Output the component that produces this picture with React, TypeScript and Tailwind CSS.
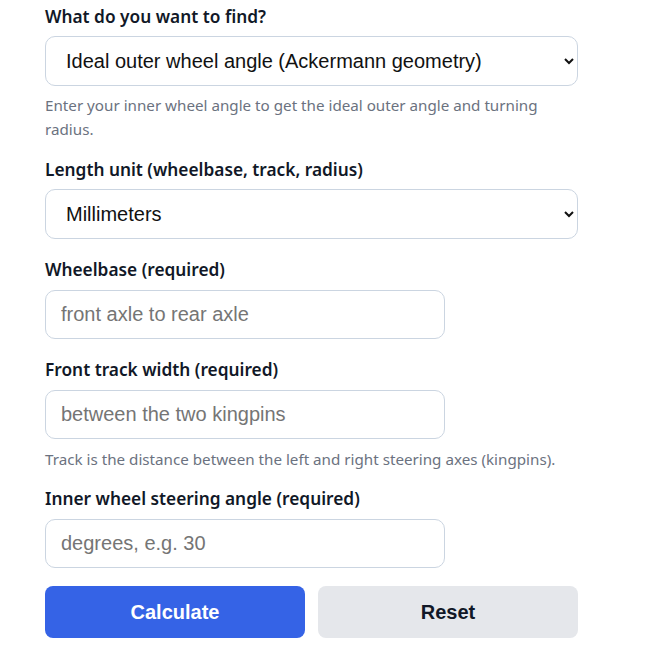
import React from "react";

const labelCls =
  "block text-[17.3px] leading-[24px] font-semibold text-[#111827] [font-family:'Noto_Sans',sans-serif]";
const helpCls =
  "text-[15.2px] leading-[24px] text-[#6b7280] [font-family:'Noto_Sans',sans-serif]";
const selectCls =
  "block w-full h-[50px] rounded-[10px] border border-[#cbd5e1] bg-white px-4 text-[20px] text-[#111] [font-family:'Liberation_Sans',Arial,sans-serif]";
const inputCls =
  "block w-[400px] h-[49px] rounded-[10px] border border-[#cbd5e1] bg-white px-[15px] text-[20px] text-[#111] placeholder:text-[#757575] [font-family:'Liberation_Sans',Arial,sans-serif]";

export default function App() {
  return (
    <div className="min-h-[672px] bg-white">
      <div className="ml-[45px] w-[533px] pt-[5px]">
        <label className={labelCls}>What do you want to find?</label>
        <select className={`${selectCls} mt-[7px]`} defaultValue="outer">
          <option value="outer">Ideal outer wheel angle (Ackermann geometry)</option>
        </select>
        <p className={`${helpCls} mt-[7px]`}>
          Enter your inner wheel angle to get the ideal outer angle and turning radius.
        </p>

        <label className={`${labelCls} mt-[17px]`}>Length unit (wheelbase, track, radius)</label>
        <select className={`${selectCls} mt-[7px]`} defaultValue="mm">
          <option value="mm">Millimeters</option>
        </select>

        <label className={`${labelCls} mt-[19px]`}>Wheelbase (required)</label>
        <input className={`${inputCls} mt-[8px]`} placeholder="front axle to rear axle" />

        <label className={`${labelCls} mt-[19px]`}>Front track width (required)</label>
        <input className={`${inputCls} mt-[8px]`} placeholder="between the two kingpins" />
        <p className={`${helpCls} mt-[8px]`}>
          Track is the distance between the left and right steering axes (kingpins).
        </p>

        <label className={`${labelCls} mt-[16px]`}>Inner wheel steering angle (required)</label>
        <input className={`${inputCls} mt-[8px]`} placeholder="degrees, e.g. 30" />

        <div className="mt-[18px] flex gap-[13px]">
          <button className="h-[52px] w-[260px] rounded-[8px] bg-[#3563e6] text-[20px] font-bold text-white [font-family:'Liberation_Sans',Arial,sans-serif]">
            Calculate
          </button>
          <button className="h-[52px] w-[260px] rounded-[8px] bg-[#e5e7eb] text-[20px] font-bold text-[#111827] [font-family:'Liberation_Sans',Arial,sans-serif]">
            Reset
          </button>
        </div>
      </div>
    </div>
  );
}
